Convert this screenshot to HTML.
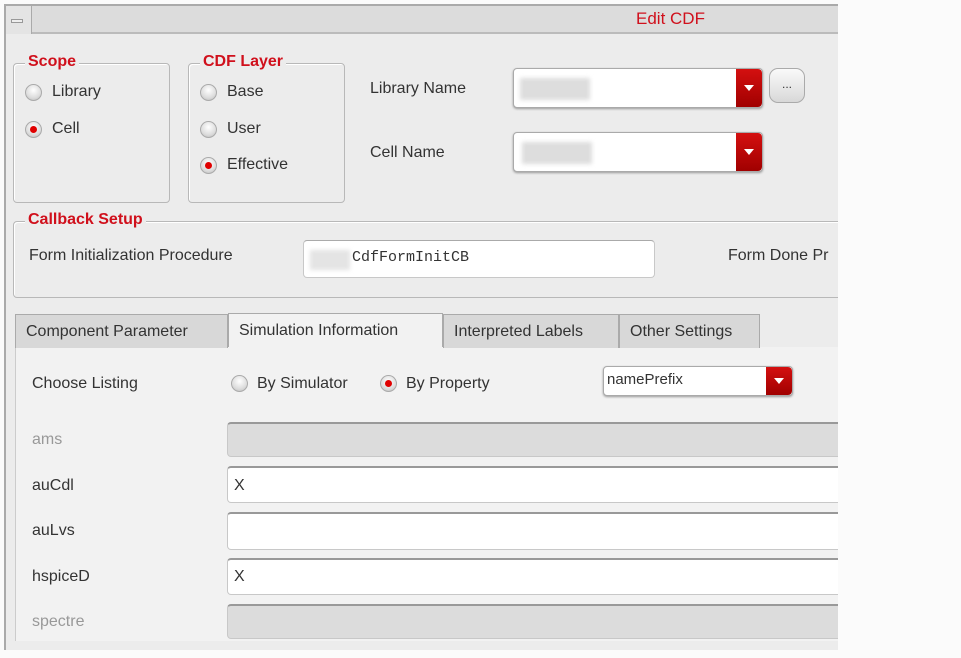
<!DOCTYPE html>
<html><head><style>
*{box-sizing:border-box}
body{margin:0;width:961px;height:658px;background:#fbfbfb;font-family:"Liberation Sans",sans-serif;position:relative;overflow:hidden;color:#333}
.a{position:absolute}
.win{left:4px;top:4px;width:834px;height:646px;background:#ececec;border-top:2px solid #aaa;border-left:2px solid #aaa}
.title{left:6px;top:6px;width:832px;height:28px;background:#dcdcdc;border-bottom:2px solid #bbb}
.t{font-size:16px;white-space:nowrap}
.box{border:1px solid #b8b8b8;border-radius:4px;box-shadow:inset 1px 1px 0 #fff}
.leg{font-size:16px;font-weight:bold;color:#d0101c;background:#ececec;padding:0 3px;white-space:nowrap}
.radio{width:17px;height:17px;border-radius:50%;background:radial-gradient(circle at 50% 35%,#fff,#ddd 60%,#bbb);border:1px solid #aaa}
.radio.on::after{content:"";position:absolute;left:4px;top:4px;width:7px;height:7px;border-radius:50%;background:#e00000}
.combo{background:#fff;border:1px solid #aaa;border-radius:4px;box-shadow:0 1px 2px #999}
.arr{position:absolute;right:0;top:0;bottom:0;width:26px;background:linear-gradient(#d41010,#a00000);border-radius:0 4px 4px 0}
.arr::after{content:"";position:absolute;left:8px;top:50%;margin-top:-3px;border-left:5px solid transparent;border-right:5px solid transparent;border-top:6px solid #fff}
.field{background:#fff;border:1px solid #c8c8c8;border-top:2px solid #999;border-radius:4px}
.field.dis{background:#dcdcdc}
.tab{height:34px;top:314px;background:#d8d8d8;border:1px solid #aaa;border-bottom:none;font-size:16px;padding:8px 10px;white-space:nowrap}
</style></head><body>
<div class="a win"></div>
<div class="a title"></div>
<div class="a" style="left:6px;top:6px;width:26px;height:28px;border-right:1px solid #aaa;background:#e4e4e4"></div>
<div class="a" style="left:11px;top:19px;width:12px;height:4px;border:1px solid #999;background:#eee"></div>
<div class="a t" style="left:636px;top:9px;color:#d0101c;font-size:17px">Edit CDF</div>

<div class="a box" style="left:13px;top:63px;width:157px;height:140px"></div>
<div class="a leg" style="left:25px;top:53px">Scope</div>
<div class="a radio" style="left:25px;top:84px"></div><div class="a t" style="left:52px;top:83px">Library</div>
<div class="a radio on" style="left:25px;top:121px"></div><div class="a t" style="left:52px;top:120px">Cell</div>

<div class="a box" style="left:188px;top:63px;width:157px;height:140px"></div>
<div class="a leg" style="left:200px;top:53px">CDF Layer</div>
<div class="a radio" style="left:200px;top:84px"></div><div class="a t" style="left:227px;top:83px">Base</div>
<div class="a radio" style="left:200px;top:121px"></div><div class="a t" style="left:227px;top:120px">User</div>
<div class="a radio on" style="left:200px;top:157px"></div><div class="a t" style="left:227px;top:156px">Effective</div>

<div class="a t" style="left:370px;top:80px">Library Name</div>
<div class="a combo" style="left:513px;top:68px;width:250px;height:40px"><div class="arr"></div></div>
<div class="a" style="left:520px;top:78px;width:70px;height:22px;background:#ddd;filter:blur(2px)"></div>
<div class="a" style="left:769px;top:68px;width:36px;height:35px;border-radius:9px;border:1px solid #aaa;background:linear-gradient(#fafafa,#d8d8d8);font-size:12px;text-align:center;line-height:30px">...</div>
<div class="a t" style="left:370px;top:144px">Cell Name</div>
<div class="a combo" style="left:513px;top:132px;width:250px;height:40px"><div class="arr"></div></div>
<div class="a" style="left:522px;top:142px;width:70px;height:22px;background:#ddd;filter:blur(2px)"></div>

<div class="a box" style="left:13px;top:221px;width:830px;height:77px"></div>
<div class="a leg" style="left:25px;top:211px">Callback Setup</div>
<div class="a t" style="left:29px;top:247px">Form Initialization Procedure</div>
<div class="a field" style="left:303px;top:240px;width:352px;height:38px;border-top:1px solid #aaa"></div>
<div class="a" style="left:310px;top:250px;width:40px;height:20px;background:#e4e4e4;filter:blur(2px)"></div>
<div class="a t" style="left:352px;top:249px;font-family:'Liberation Mono',monospace;font-size:15px">CdfFormInitCB</div>
<div class="a t" style="left:728px;top:247px">Form Done Pr</div>

<div class="a" style="left:15px;top:347px;width:823px;height:294px;background:#f2f2f2;border-left:1px solid #ccc"></div>
<div class="a tab" style="left:15px;width:213px">Component Parameter</div>
<div class="a tab" style="left:228px;width:215px;background:#f2f2f2;height:34px;top:313px;padding-top:8px">Simulation Information</div>
<div class="a tab" style="left:443px;width:176px">Interpreted Labels</div>
<div class="a tab" style="left:619px;width:141px">Other Settings</div>

<div class="a t" style="left:32px;top:375px">Choose Listing</div>
<div class="a radio" style="left:231px;top:375px"></div><div class="a t" style="left:257px;top:375px">By Simulator</div>
<div class="a radio on" style="left:380px;top:375px"></div><div class="a t" style="left:406px;top:375px">By Property</div>
<div class="a combo" style="left:603px;top:366px;width:190px;height:30px"><div class="arr"></div></div>
<div class="a t" style="left:607px;top:371px;font-size:15px">namePrefix</div>

<div class="a t" style="left:32px;top:431px;color:#999">ams</div>
<div class="a field dis" style="left:227px;top:422px;width:615px;height:35px"></div>
<div class="a t" style="left:32px;top:477px">auCdl</div>
<div class="a field" style="left:227px;top:466px;width:615px;height:37px"></div>
<div class="a t" style="left:234px;top:477px">X</div>
<div class="a t" style="left:32px;top:522px">auLvs</div>
<div class="a field" style="left:227px;top:512px;width:615px;height:38px"></div>
<div class="a t" style="left:32px;top:568px">hspiceD</div>
<div class="a field" style="left:227px;top:558px;width:615px;height:37px"></div>
<div class="a t" style="left:234px;top:568px">X</div>
<div class="a t" style="left:32px;top:613px;color:#999">spectre</div>
<div class="a field dis" style="left:227px;top:604px;width:615px;height:35px"></div>
<div class="a" style="left:838px;top:0;width:123px;height:658px;background:#fbfbfb"></div>
<div class="a" style="left:0;top:650px;width:961px;height:8px;background:#fbfbfb"></div>
</body></html>
